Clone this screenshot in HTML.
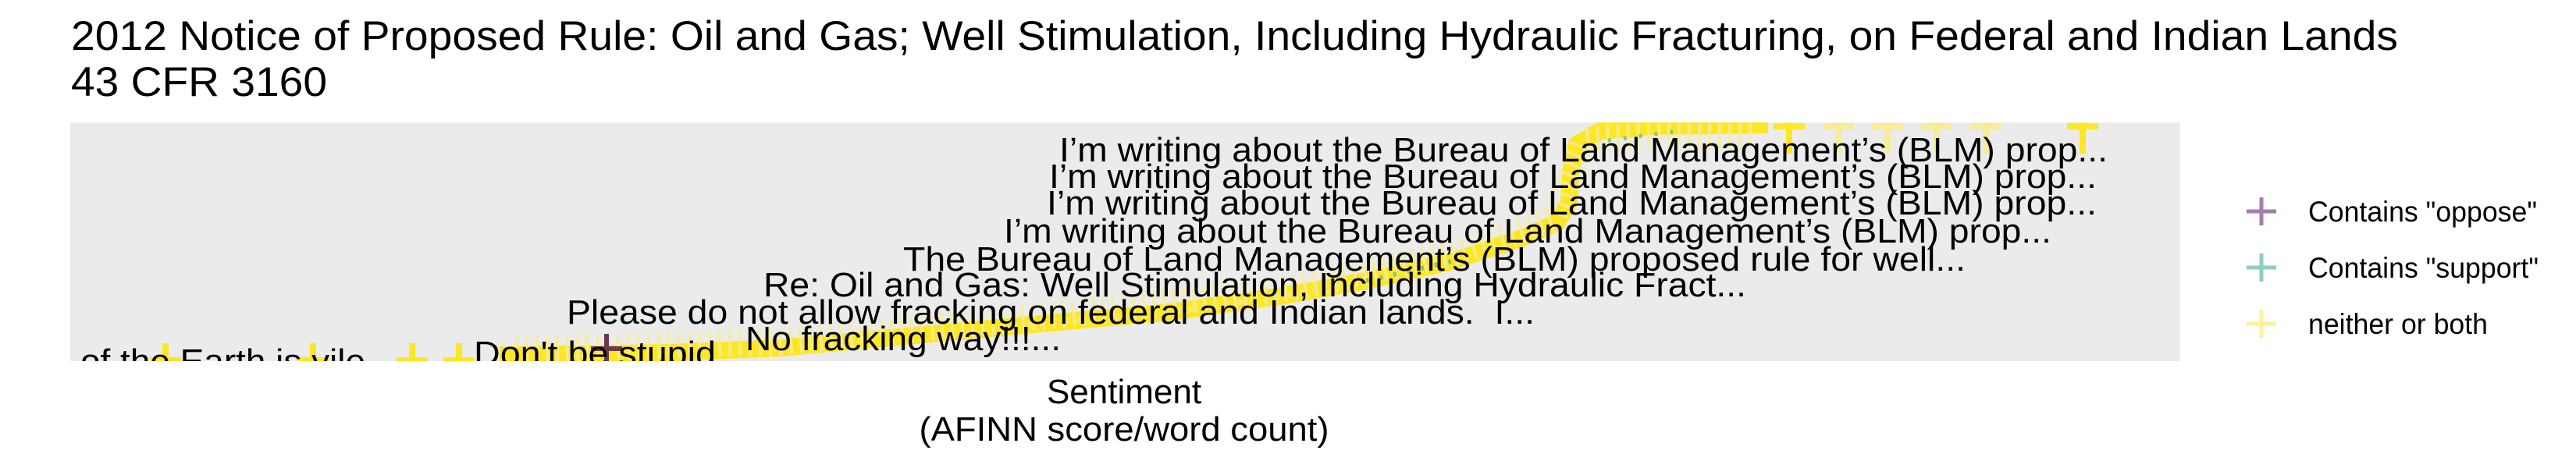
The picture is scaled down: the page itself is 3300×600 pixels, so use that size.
<!DOCTYPE html>
<html><head><meta charset="utf-8"><style>
html,body{margin:0;padding:0;background:#fff;width:3300px;height:600px;overflow:hidden}
svg{display:block}
text{font-family:"Liberation Sans",Arial,sans-serif;fill:#000}
</style></head><body>
<svg width="3300" height="600" viewBox="0 0 3300 600" xmlns="http://www.w3.org/2000/svg">
<rect width="3300" height="600" fill="#fff"/>
<text x="91" y="64" font-size="53" textLength="2981" lengthAdjust="spacingAndGlyphs">2012 Notice of Proposed Rule: Oil and Gas; Well Stimulation, Including Hydraulic Fracturing, on Federal and Indian Lands</text>
<text x="91" y="123" font-size="53" textLength="328" lengthAdjust="spacingAndGlyphs">43 CFR 3160</text>
<defs><clipPath id="p"><rect x="90" y="157" width="2703" height="306"/></clipPath></defs>
<rect x="90" y="157" width="2703" height="306" fill="#ebebeb"/>
<g clip-path="url(#p)">
<g fill="none" stroke-linejoin="round" stroke-linecap="butt">
<polyline points="640,455 860,452 1000,446 1150,432 1300,418 1500,400 1650,378 1750,360 1860,335 1950,305 1995,285 2010,260 2012,220 2020,185 2050,168 2120,162 2265,160" stroke="#fde725" stroke-width="22"/>
<polyline points="660,448 1000,438 1300,410 1650,370 1860,325 1990,280 2030,180 2100,175 2250,175" stroke="#f6ec9a" stroke-width="34" stroke-dasharray="4 9" opacity="0.8"/>
<polyline points="1300,418 1500,400 1650,378 1750,360" stroke="#f5e96a" stroke-width="8" stroke-dasharray="6 10"/>
<polyline points="1750,360 1860,335" stroke="#8fc46a" stroke-width="6" stroke-dasharray="4 14"/>
<polyline points="2060,180 2150,168" stroke="#8fc46a" stroke-width="5" stroke-dasharray="4 16"/>
</g>
<g stroke="#fde725" stroke-width="8">
<path d="M212 440V484M192 462H232M401 440V484M381 462H421M528 440V484M508 462H548M588 440V484M568 462H608"/>
<path d="M2292 150V197M2272 162H2312M2668 150V197M2648 162H2688"/>
</g>
<g stroke="#f6ec9a" stroke-width="8">
<path d="M2355 150V197M2335 162H2375M2418 150V197M2398 162H2438M2481 150V197M2461 162H2501M2544 150V197M2524 162H2564"/>
</g>
<path d="M777 428V468M757 447H797" stroke="#6b3a4a" stroke-width="6"/>
<g font-size="44">
<text x="1357" y="207" textLength="1343" lengthAdjust="spacingAndGlyphs">I’m writing about the Bureau of Land Management’s (BLM) prop...</text>
<text x="1344" y="241" textLength="1342" lengthAdjust="spacingAndGlyphs">I’m writing about the Bureau of Land Management’s (BLM) prop...</text>
<text x="1341" y="275" textLength="1345" lengthAdjust="spacingAndGlyphs">I’m writing about the Bureau of Land Management’s (BLM) prop...</text>
<text x="1286" y="311" textLength="1342" lengthAdjust="spacingAndGlyphs">I’m writing about the Bureau of Land Management’s (BLM) prop...</text>
<text x="1157" y="347" textLength="1361" lengthAdjust="spacingAndGlyphs">The Bureau of Land Management’s (BLM) proposed rule for well...</text>
<text x="978" y="380" textLength="1259" lengthAdjust="spacingAndGlyphs">Re: Oil and Gas: Well Stimulation, Including Hydraulic Fract...</text>
<text x="726" y="415" textLength="1240" lengthAdjust="spacingAndGlyphs" xml:space="preserve">Please do not allow fracking on federal and Indian lands.  I...</text>
<text x="955" y="449" textLength="404" lengthAdjust="spacingAndGlyphs">No fracking way!!!...</text>
<text x="607" y="468" textLength="310" lengthAdjust="spacingAndGlyphs">Don't be stupid</text>
<text x="103" y="478" textLength="365" lengthAdjust="spacingAndGlyphs">of the Earth is vile</text>
</g>
</g>
<text x="1440" y="517" font-size="44" text-anchor="middle">Sentiment</text>
<text x="1440" y="565" font-size="44" text-anchor="middle" textLength="525" lengthAdjust="spacingAndGlyphs">(AFINN score/word count)</text>
<g stroke-width="5">
<path d="M2897 253V289M2878 271H2916" stroke="#a27fac"/>
<path d="M2897 325V361M2878 343H2916" stroke="#8fcdc6"/>
<path d="M2897 397V433M2878 415H2916" stroke="#fdf29a"/>
</g>
<g font-size="37">
<text x="2957" y="284" textLength="293" lengthAdjust="spacingAndGlyphs">Contains "oppose"</text>
<text x="2957" y="356" textLength="295" lengthAdjust="spacingAndGlyphs">Contains "support"</text>
<text x="2957" y="428" textLength="230" lengthAdjust="spacingAndGlyphs">neither or both</text>
</g>
</svg>
</body></html>
